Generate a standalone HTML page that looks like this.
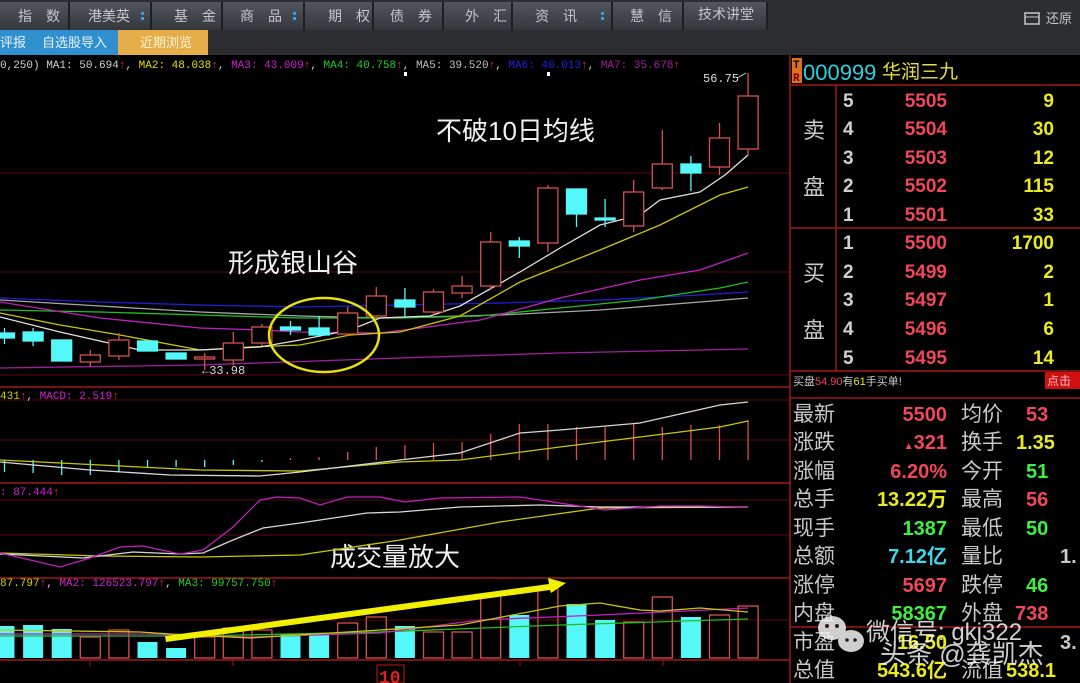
<!DOCTYPE html>
<html><head><meta charset="utf-8"><style>
html,body{margin:0;padding:0;background:#000;width:1080px;height:683px;overflow:hidden}
svg{display:block}
.cj{font-family:"Liberation Sans","Noto Sans CJK SC",sans-serif}
.mo{font-family:"Liberation Mono","Noto Sans CJK SC",monospace}
</style></head><body>
<svg width="1080" height="683" viewBox="0 0 1080 683" xmlns="http://www.w3.org/2000/svg">
<defs>
<linearGradient id="nav" x1="0" y1="0" x2="0" y2="1"><stop offset="0" stop-color="#52565d"/><stop offset="1" stop-color="#34373c"/></linearGradient>
</defs>
<rect width="1080" height="683" fill="#000"/>
<!-- top nav -->
<rect x="0" y="0" width="1080" height="30" fill="#2c2e32"/>
<rect x="0" y="2" width="767" height="28" fill="url(#nav)"/>
<g stroke="#1e1f22" stroke-width="2">
<line x1="69" y1="2" x2="69" y2="30"/><line x1="151" y1="2" x2="151" y2="30"/><line x1="222" y1="2" x2="222" y2="30"/><line x1="304" y1="2" x2="304" y2="30"/><line x1="373" y1="2" x2="373" y2="30"/><line x1="443" y1="2" x2="443" y2="30"/><line x1="512" y1="2" x2="512" y2="30"/><line x1="612" y1="2" x2="612" y2="30"/><line x1="683" y1="2" x2="683" y2="30"/><line x1="767" y1="2" x2="767" y2="30"/>
</g>
<g class="cj" font-size="14" fill="#c4c6c9">
<text x="18" y="21">指　数</text><text x="88" y="21">港美英</text><text x="174" y="21">基　金</text><text x="240" y="21">商　品</text><text x="328" y="21">期　权</text><text x="390" y="21">债　券</text><text x="465" y="21">外　汇</text><text x="535" y="21">资　讯</text><text x="630" y="21">慧　信</text><text x="698" y="19">技术讲堂</text>
<text x="1046" y="23" font-size="13">还原</text>
</g>
<g fill="#3aa0e0"><rect x="141" y="12" width="3" height="3"/><rect x="141" y="17" width="3" height="3"/><rect x="293" y="12" width="3" height="3"/><rect x="293" y="17" width="3" height="3"/><rect x="601" y="12" width="3" height="3"/><rect x="601" y="17" width="3" height="3"/></g>
<rect x="1025" y="13" width="14" height="11" fill="none" stroke="#c4c6c9" stroke-width="1.5"/><line x1="1025" y1="17" x2="1039" y2="17" stroke="#c4c6c9"/>
<!-- second row -->
<rect x="0" y="30" width="1080" height="25" fill="#2b2d31"/>
<rect x="0" y="30" width="118" height="25" fill="#2f8fcf"/>
<rect x="118" y="30" width="90" height="25" fill="#e6ae4a"/>
<g class="cj" font-size="13" fill="#e8f2fa"><text x="0" y="47">评报</text><text x="42" y="47">自选股导入</text><text x="140" y="47" fill="#fff3d8">近期浏览</text></g>
<!-- MA legend -->
<g class="mo" font-size="11">
<text x="0" y="68" fill="#d0d0d0">0,250) MA1: 50.694<tspan fill="#f03030">↑</tspan>, <tspan fill="#e0e000">MA2: 48.038</tspan><tspan fill="#f03030">↑</tspan>, <tspan fill="#d020d0">MA3: 43.009</tspan><tspan fill="#f03030">↑</tspan>, <tspan fill="#20d020">MA4: 40.758</tspan><tspan fill="#f03030">↑</tspan>, <tspan fill="#c0c0c0">MA5: 39.520</tspan><tspan fill="#f03030">↑</tspan>, <tspan fill="#2020e0">MA6: 40.013</tspan><tspan fill="#f03030">↑</tspan>, <tspan fill="#a020a0">MA7: 35.678</tspan><tspan fill="#f03030">↑</tspan></text>
</g>
<rect x="404" y="72" width="3" height="4" fill="#fff"/><rect x="547" y="72" width="3" height="4" fill="#fff"/>
<!-- grid lines -->
<g stroke="#5a0a0a" stroke-width="1">
<line x1="0" y1="173" x2="790" y2="173"/><line x1="0" y1="272" x2="790" y2="272"/><line x1="0" y1="375" x2="790" y2="375"/>
<line x1="0" y1="400" x2="790" y2="400"/><line x1="0" y1="440" x2="790" y2="440"/>
<line x1="0" y1="500" x2="790" y2="500"/><line x1="0" y1="535" x2="790" y2="535"/>
<line x1="0" y1="620" x2="790" y2="620"/>
</g>
<g stroke="#a01818" stroke-width="1.5">
<line x1="0" y1="387" x2="790" y2="387"/><line x1="0" y1="483" x2="790" y2="483"/><line x1="0" y1="578" x2="790" y2="578"/><line x1="0" y1="660" x2="790" y2="660"/>
<line x1="790" y1="55" x2="790" y2="683"/>
</g>
<g stroke="#a01818" stroke-width="1"><line x1="90" y1="660" x2="90" y2="666"/><line x1="233" y1="660" x2="233" y2="666"/><line x1="520" y1="660" x2="520" y2="666"/><line x1="663" y1="660" x2="663" y2="666"/></g>
<!-- MA lines -->
<g fill="none" stroke-width="1.3">
<polyline stroke="#a020a0" points="0,368 200,365 400,358 560,353 748,349"/>
<polyline stroke="#2020d8" points="0,298 100,302 200,305 300,307 400,305 500,303 600,300 700,295 748,292"/>
<polyline stroke="#a8a8a8" points="0,300 100,306 200,312 300,316 380,318 500,315 600,310 700,302 748,298"/>
<polyline stroke="#20c020" points="0,310 100,312 200,315 300,318 400,318 480,316 560,308 640,300 720,288 748,282"/>
<polyline stroke="#c020c0" points="0,302 100,318 200,328 260,330 300,332 380,333 420,328 480,320 560,298 640,280 700,270 748,253"/>
<polyline stroke="#c8c800" points="0,313 60,325 120,335 200,350 250,347 300,345 350,335 400,332 460,316 520,282 600,250 660,225 720,195 748,187"/>
<polyline stroke="#e0e0e0" points="0,317 60,332 140,350 200,350 260,347 300,340 350,330 380,318 430,316 460,306 520,272 560,248 600,225 640,215 660,200 700,192 725,175 748,155"/>
</g>
<!-- candles -->
<g stroke="#d85050" stroke-width="1.3" fill="#000">
<line x1="90.3" y1="350" x2="90.3" y2="366"/><rect x="80.3" y="355" width="20" height="7"/>
<line x1="118.9" y1="333" x2="118.9" y2="360"/><rect x="108.9" y="340" width="20" height="16"/>
<line x1="204.7" y1="353" x2="204.7" y2="370"/><rect x="194.7" y="357" width="20" height="2"/>
<line x1="233.3" y1="332" x2="233.3" y2="365"/><rect x="223.3" y="343" width="20" height="17"/>
<line x1="261.9" y1="324" x2="261.9" y2="346"/><rect x="251.9" y="327" width="20" height="16"/>
<line x1="347.7" y1="307" x2="347.7" y2="336"/><rect x="337.7" y="313" width="20" height="21"/>
<line x1="376.3" y1="287" x2="376.3" y2="319"/><rect x="366.3" y="296" width="20" height="20"/>
<line x1="433.5" y1="289" x2="433.5" y2="315"/><rect x="423.5" y="292" width="20" height="20"/>
<line x1="462.1" y1="276" x2="462.1" y2="298"/><rect x="452.1" y="286" width="20" height="7"/>
<line x1="490.7" y1="232" x2="490.7" y2="290"/><rect x="480.7" y="242" width="20" height="44"/>
<line x1="547.9" y1="185" x2="547.9" y2="252"/><rect x="537.9" y="188" width="20" height="55"/>
<line x1="633.7" y1="180" x2="633.7" y2="232"/><rect x="623.7" y="192" width="20" height="34"/>
<line x1="662.3" y1="130" x2="662.3" y2="190"/><rect x="652.3" y="164" width="20" height="24"/>
<line x1="719.5" y1="123" x2="719.5" y2="175"/><rect x="709.5" y="138" width="20" height="29"/>
<line x1="748.1" y1="73" x2="748.1" y2="155"/><rect x="738.1" y="96" width="20" height="53"/>
</g>
<g stroke="#54f8f8" stroke-width="1.3" fill="#54f8f8">
<line x1="4.5" y1="328" x2="4.5" y2="344"/><rect x="-5.5" y="333" width="20" height="5"/>
<line x1="33.1" y1="328" x2="33.1" y2="346"/><rect x="23.1" y="332" width="20" height="9"/>
<rect x="51.7" y="340" width="20" height="21"/>
<rect x="137.5" y="341" width="20" height="10"/>
<rect x="166.1" y="353" width="20" height="6"/>
<line x1="290.5" y1="321" x2="290.5" y2="335"/><rect x="280.5" y="327" width="20" height="3"/>
<line x1="319.1" y1="316" x2="319.1" y2="337"/><rect x="309.1" y="328" width="20" height="7"/>
<line x1="404.9" y1="288" x2="404.9" y2="317"/><rect x="394.9" y="300" width="20" height="7"/>
<line x1="519.3" y1="237" x2="519.3" y2="258"/><rect x="509.3" y="241" width="20" height="5"/>
<line x1="576.5" y1="189" x2="576.5" y2="227"/><rect x="566.5" y="189" width="20" height="25"/>
<line x1="605.1" y1="199" x2="605.1" y2="227"/><rect x="595.1" y="218" width="20" height="2"/>
<line x1="690.9" y1="156" x2="690.9" y2="191"/><rect x="680.9" y="164" width="20" height="9"/>
</g>
<g class="mo" font-size="12" fill="#d8d8d8"><text x="202" y="374">←33.98</text><text x="703" y="82">56.75</text></g>
<line x1="737" y1="78" x2="746" y2="73" stroke="#d8d8d8"/>
<!-- annotations -->
<ellipse cx="324" cy="335" rx="55" ry="37" fill="none" stroke="#e8e010" stroke-width="2.5"/>
<g class="cj" font-size="26" fill="#f0f0f0"><text x="436" y="140">不破10日均线</text><text x="228" y="272">形成银山谷</text><text x="330" y="566">成交量放大</text></g>
<!-- MACD -->
<text class="mo" x="0" y="399" font-size="11" fill="#d0d000">431<tspan fill="#f03030">↑</tspan><tspan fill="#d0d0d0">, </tspan><tspan fill="#d020d0">MACD: 2.519</tspan><tspan fill="#f03030">↑</tspan></text>
<g stroke="#54f8f8" stroke-width="1.3">
<line x1="4.5" y1="460" x2="4.5" y2="472"/><line x1="33.1" y1="460" x2="33.1" y2="473"/><line x1="61.7" y1="460" x2="61.7" y2="475"/><line x1="90.3" y1="460" x2="90.3" y2="475"/><line x1="118.9" y1="460" x2="118.9" y2="472"/><line x1="147.5" y1="460" x2="147.5" y2="468"/><line x1="176.1" y1="460" x2="176.1" y2="467"/><line x1="204.7" y1="460" x2="204.7" y2="467"/><line x1="233.3" y1="460" x2="233.3" y2="465"/><line x1="261.9" y1="460" x2="261.9" y2="462"/>
</g>
<g stroke="#d85050" stroke-width="1.3">
<line x1="290.5" y1="458" x2="290.5" y2="460"/><line x1="319.1" y1="457" x2="319.1" y2="460"/><line x1="347.7" y1="452" x2="347.7" y2="460"/><line x1="376.3" y1="447" x2="376.3" y2="460"/><line x1="404.9" y1="445" x2="404.9" y2="460"/><line x1="433.5" y1="443" x2="433.5" y2="460"/><line x1="462.1" y1="442" x2="462.1" y2="460"/><line x1="490.7" y1="434" x2="490.7" y2="460"/><line x1="519.3" y1="424" x2="519.3" y2="460"/><line x1="547.9" y1="424" x2="547.9" y2="460"/><line x1="576.5" y1="427" x2="576.5" y2="460"/><line x1="605.1" y1="427" x2="605.1" y2="460"/><line x1="633.7" y1="424" x2="633.7" y2="460"/><line x1="662.3" y1="427" x2="662.3" y2="460"/><line x1="690.9" y1="425" x2="690.9" y2="460"/><line x1="719.5" y1="425" x2="719.5" y2="460"/><line x1="748.1" y1="420" x2="748.1" y2="460"/>
</g>
<g fill="none" stroke-width="1.3">
<polyline stroke="#c8c800" points="0,460 200,470 300,471 400,462 460,460 560,447 640,437 720,427 748,421"/>
<polyline stroke="#d8d8d8" points="0,462 90,470 170,475 260,476 300,472 400,460 460,453 520,433 560,430 640,423 720,405 748,402"/>
</g>
<!-- KDJ -->
<text class="mo" x="0" y="495" font-size="11" fill="#d020d0">: 87.444<tspan fill="#f03030">↑</tspan></text>
<g fill="none" stroke-width="1.3">
<polyline stroke="#c8c800" points="0,553 100,556 200,557 300,555 400,540 500,522 600,508 748,507"/>
<polyline stroke="#d8d8d8" points="0,554 83,558 133,552 180,554 203,553 233,540 263,528 300,523 367,513 400,512 460,507 540,505 600,507 748,507"/>
<polyline stroke="#c020c0" points="0,553 60,567 90,558 120,547 143,546 180,554 203,550 233,527 260,500 277,497 300,498 320,505 347,497 380,497 405,502 440,498 520,497 540,500 605,510 660,506 700,506 740,507 748,507"/>
</g>
<!-- Volume -->
<text class="mo" x="0" y="586" font-size="11" fill="#d0d000">87.797<tspan fill="#f03030">↑</tspan><tspan fill="#d0d0d0">, </tspan><tspan fill="#d020d0">MA2: 126523.797</tspan><tspan fill="#f03030">↑</tspan><tspan fill="#d0d0d0">, </tspan><tspan fill="#20d020">MA3: 99757.750</tspan><tspan fill="#f03030">↑</tspan></text>
<g fill="#54f8f8">
<rect x="-5.5" y="626" width="20" height="32"/><rect x="23.1" y="625" width="20" height="33"/><rect x="51.7" y="629" width="20" height="29"/><rect x="137.5" y="642" width="20" height="16"/><rect x="166.1" y="648" width="20" height="10"/><rect x="280.5" y="634" width="20" height="24"/><rect x="309.1" y="635" width="20" height="23"/><rect x="394.9" y="626" width="20" height="32"/><rect x="509.3" y="615" width="20" height="43"/><rect x="566.5" y="604" width="20" height="54"/><rect x="595.1" y="620" width="20" height="38"/><rect x="680.9" y="617" width="20" height="41"/>
</g>
<g fill="none" stroke="#d85050" stroke-width="1.3">
<rect x="80.3" y="637" width="20" height="21"/><rect x="108.9" y="630" width="20" height="28"/><rect x="194.7" y="637" width="20" height="21"/><rect x="223.3" y="628" width="20" height="30"/><rect x="251.9" y="630" width="20" height="28"/><rect x="337.7" y="623" width="20" height="35"/><rect x="366.3" y="617" width="20" height="41"/><rect x="423.5" y="632" width="20" height="26"/><rect x="452.1" y="632" width="20" height="26"/><rect x="480.7" y="595" width="20" height="63"/><rect x="537.9" y="588" width="20" height="70"/><rect x="623.7" y="622" width="20" height="36"/><rect x="652.3" y="597" width="20" height="61"/><rect x="709.5" y="615" width="20" height="43"/><rect x="738.1" y="606" width="20" height="52"/>
</g>
<g fill="none" stroke-width="1.3">
<polyline stroke="#20c020" points="0,636 200,636 380,632 560,625 748,619"/>
<polyline stroke="#c020c0" points="0,634 150,634 250,637 380,633 480,620 600,615 748,608"/>
<polyline stroke="#c8c800" points="0,630 140,632 170,634 250,638 380,630 460,625 560,606 600,603 640,610 660,611 700,608 748,612"/>
</g>
<polygon points="165,636 549,584 548,578 566,583 551,593 550,590 166,642" fill="#f0f000"/>
<rect x="377" y="665" width="27" height="18" fill="none" stroke="#c01818"/>
<text class="mo" x="379" y="683" font-size="18" font-weight="bold" fill="#e02020">10</text>
<!-- right panel -->
<g stroke="#a01818" stroke-width="1.5">
<line x1="790" y1="85" x2="1080" y2="85"/><line x1="790" y1="228" x2="1080" y2="228"/><line x1="790" y1="371" x2="1080" y2="371"/><line x1="790" y1="398" x2="1080" y2="398"/><line x1="836" y1="85" x2="836" y2="371"/><line x1="790" y1="627" x2="1080" y2="627"/>
</g>
<rect x="792" y="58" width="10" height="25" fill="#e07020"/>
<g class="mo" font-size="11" font-weight="bold" fill="#000"><text x="793" y="68">T</text><text x="793" y="81" fill="#600">R</text></g>
<text class="cj" x="803" y="80" font-size="22" fill="#30d0e0">000999</text>
<text class="cj" x="882" y="78" font-size="19" fill="#e8e040">华润三九</text>
<g class="cj" font-size="22" fill="#c8c8c8"><text x="803" y="138">卖</text><text x="803" y="195">盘</text><text x="803" y="281">买</text><text x="803" y="338">盘</text></g>
<g class="cj" font-size="19" font-weight="bold">
<g fill="#d0d0d0"><text x="843" y="107">5</text><text x="843" y="135">4</text><text x="843" y="164">3</text><text x="843" y="192">2</text><text x="843" y="221">1</text><text x="843" y="249">1</text><text x="843" y="278">2</text><text x="843" y="306">3</text><text x="843" y="335">4</text><text x="843" y="364">5</text></g>
<g fill="#f04858" text-anchor="end"><text x="947" y="107">5505</text><text x="947" y="135">5504</text><text x="947" y="164">5503</text><text x="947" y="192">5502</text><text x="947" y="221">5501</text><text x="947" y="249">5500</text><text x="947" y="278">5499</text><text x="947" y="306">5497</text><text x="947" y="335">5496</text><text x="947" y="364">5495</text></g>
<g fill="#eaea20" text-anchor="end"><text x="1054" y="107">9</text><text x="1054" y="135">30</text><text x="1054" y="164">12</text><text x="1054" y="192">115</text><text x="1054" y="221">33</text><text x="1054" y="249">1700</text><text x="1054" y="278">2</text><text x="1054" y="306">1</text><text x="1054" y="335">6</text><text x="1054" y="364">14</text></g>
</g>
<text class="cj" x="793" y="385" font-size="11" fill="#c8c8c8">买盘<tspan fill="#f04858">54.90</tspan>有<tspan fill="#eaea20">61</tspan>手买单!</text>
<rect x="1045" y="372" width="35" height="17" fill="#d01010"/><text class="cj" x="1047" y="385" font-size="12" fill="#f0c0c0">点击</text>
<g class="cj" font-size="21" fill="#c8c8c8">
<text x="793" y="421">最新</text><text x="793" y="449">涨跌</text><text x="793" y="478">涨幅</text><text x="793" y="506">总手</text><text x="793" y="535">现手</text><text x="793" y="563">总额</text><text x="793" y="592">涨停</text><text x="793" y="620">内盘</text><text x="793" y="649">市盈</text><text x="793" y="677">总值</text>
<text x="961" y="421">均价</text><text x="961" y="449">换手</text><text x="961" y="478">今开</text><text x="961" y="506">最高</text><text x="961" y="535">最低</text><text x="961" y="563">量比</text><text x="961" y="592">跌停</text><text x="961" y="620">外盘</text><text x="961" y="677">流值</text>
</g>
<g class="cj" font-size="20" font-weight="bold" text-anchor="end">
<text x="947" y="421" fill="#f04858">5500</text><text x="947" y="449" fill="#f04858"><tspan font-size="10">▲</tspan>321</text><text x="947" y="478" fill="#f04858">6.20%</text><text x="947" y="506" fill="#eaea20">13.22万</text><text x="947" y="535" fill="#40f040">1387</text><text x="947" y="563" fill="#40d8e8">7.12亿</text><text x="947" y="592" fill="#f04858">5697</text><text x="947" y="620" fill="#40f040">58367</text><text x="947" y="649" fill="#eaea20">16.50</text><text x="947" y="677" fill="#eaea20">543.6亿</text>
</g>
<g class="cj" font-size="20" font-weight="bold">
<text x="1026" y="421" fill="#f04858">53</text><text x="1016" y="449" fill="#eaea20">1.35</text><text x="1026" y="478" fill="#40f040">51</text><text x="1026" y="506" fill="#f04858">56</text><text x="1026" y="535" fill="#40f040">50</text><text x="1060" y="563" fill="#c8c8c8">1.</text><text x="1026" y="592" fill="#40f040">46</text><text x="1015" y="620" fill="#f04858">738</text><text x="1060" y="649" fill="#c8c8c8">3.</text><text x="1006" y="677" fill="#eaea20">538.1</text>
</g>
<!-- watermark -->
<g fill="#f4f4f4" opacity="0.85">
<ellipse cx="832" cy="628" rx="14" ry="12"/><ellipse cx="851" cy="641" rx="13" ry="11"/>
</g>
<g fill="#222"><circle cx="827" cy="626" r="2"/><circle cx="837" cy="626" r="2"/><circle cx="847" cy="640" r="1.8"/><circle cx="855" cy="640" r="1.8"/></g>
<g class="cj" font-size="24" fill="#f4f4f4" opacity="0.85"><text x="866" y="640">微信号: gkj322</text><text x="880" y="663" font-size="26">头条 @龚凯杰</text></g>
</svg>
</body></html>
